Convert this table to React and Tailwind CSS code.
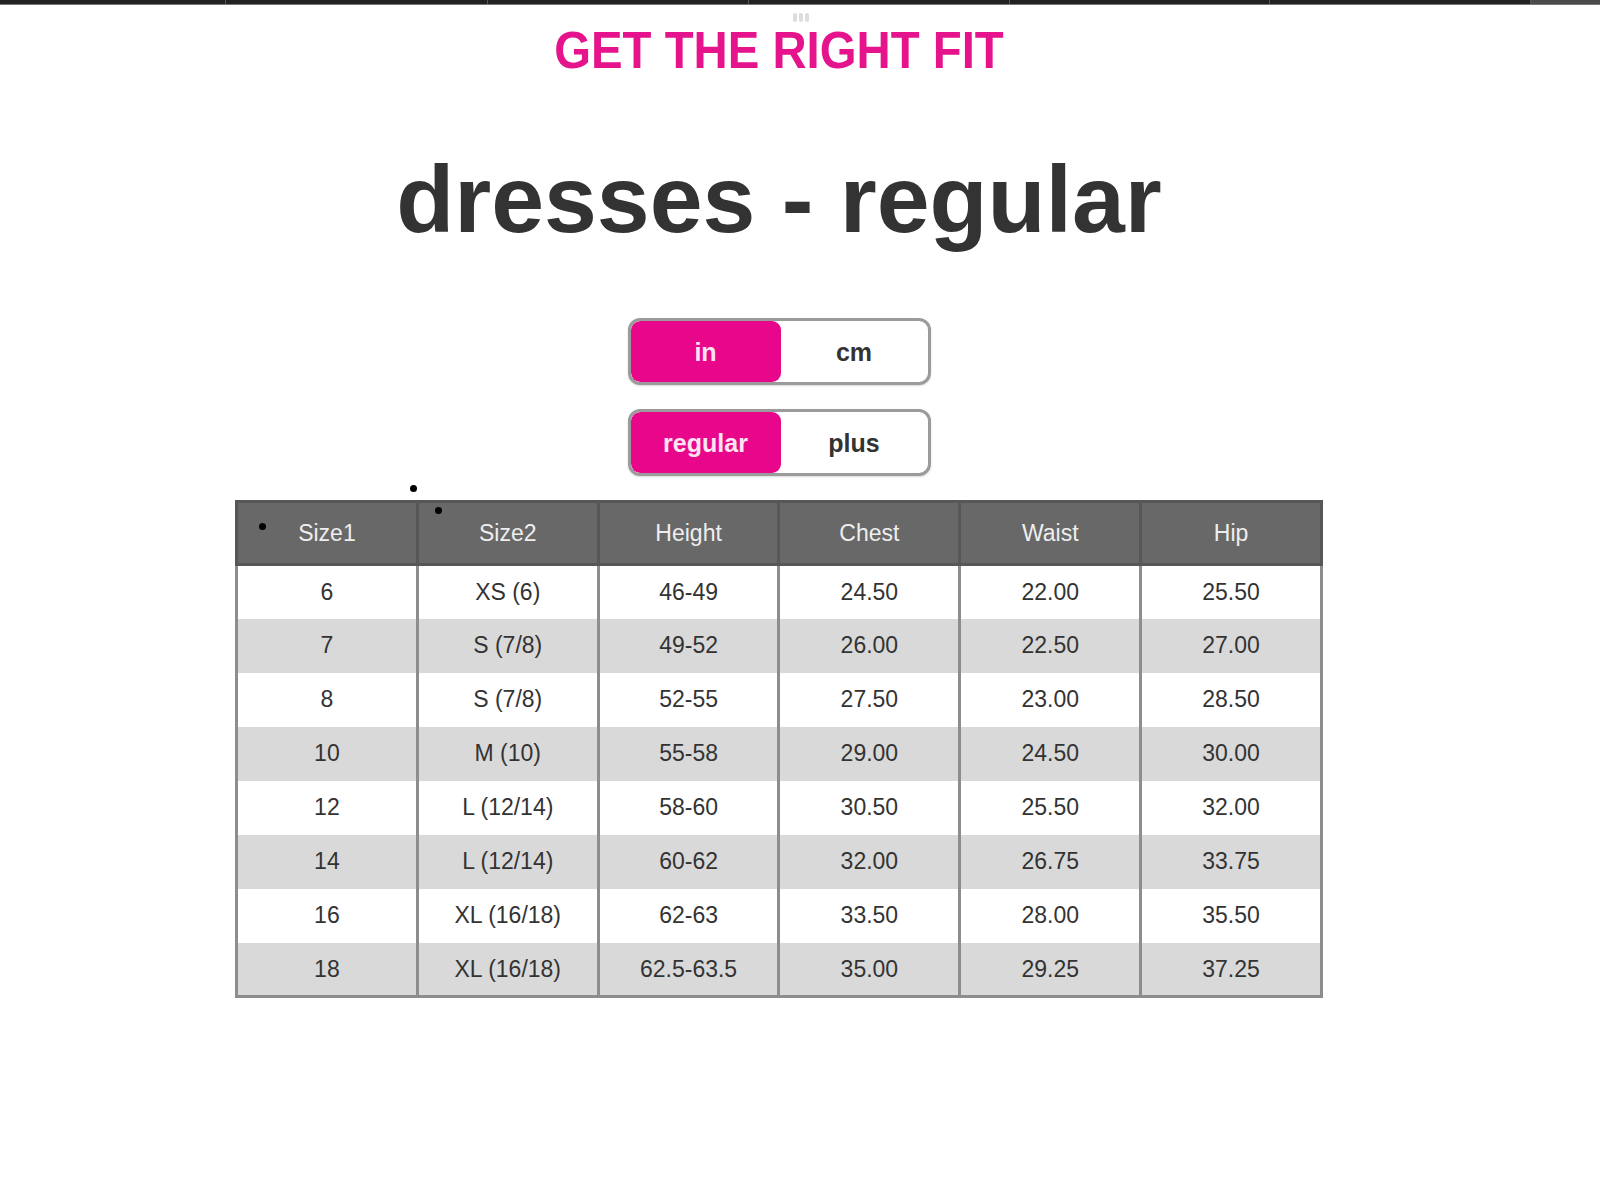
import React from "react";

const rows = [
  ["6", "XS (6)", "46-49", "24.50", "22.00", "25.50"],
  ["7", "S (7/8)", "49-52", "26.00", "22.50", "27.00"],
  ["8", "S (7/8)", "52-55", "27.50", "23.00", "28.50"],
  ["10", "M (10)", "55-58", "29.00", "24.50", "30.00"],
  ["12", "L (12/14)", "58-60", "30.50", "25.50", "32.00"],
  ["14", "L (12/14)", "60-62", "32.00", "26.75", "33.75"],
  ["16", "XL (16/18)", "62-63", "33.50", "28.00", "35.50"],
  ["18", "XL (16/18)", "62.5-63.5", "35.00", "29.25", "37.25"],
];

const headers = ["Size1", "Size2", "Height", "Chest", "Waist", "Hip"];

const Toggle = ({ on, off }) => (
  <div className="w-[303px] h-[67px] rounded-[12px] border-[3px] border-[#9b9b9b] bg-white flex overflow-hidden shadow-[0_1px_2px_rgba(0,0,0,0.15)]">
    <div className="w-[150px] h-full bg-[#e8078b] rounded-[9px] flex items-center justify-center pt-[2px] text-[25px] font-bold text-[#fde4f2]">
      {on}
    </div>
    <div className="flex-1 flex items-center justify-center pt-[2px] text-[25px] font-bold text-[#333333]">
      {off}
    </div>
  </div>
);

const TopBar = () => (
  <div className="flex h-[5px] w-full bg-[#222222] border-b border-[#777]">
    <div className="w-[226px] border-r border-[#555]" />
    <div className="w-[262px] border-r border-[#555]" />
    <div className="w-[261px] border-r border-[#555]" />
    <div className="w-[261px] border-r border-[#555]" />
    <div className="w-[260px] border-r border-[#555]" />
    <div className="w-[261px] border-r border-[#555]" />
    <div className="flex-1 bg-[#4a4a4a]" />
  </div>
);

const App = () => {
  return (
    <div
      className="relative w-[1600px] h-[1200px] bg-white flex flex-col"
      style={{ fontFamily: '"Liberation Sans", Arial, sans-serif' }}
    >
      <TopBar />
      <div className="absolute top-[13px] left-[793px] flex gap-[2px]">
        <span className="w-[4px] h-[9px] rounded-full bg-[#dddddd]" />
        <span className="w-[4px] h-[9px] rounded-full bg-[#dddddd]" />
        <span className="w-[4px] h-[9px] rounded-full bg-[#dddddd]" />
      </div>

      <div className="flex flex-col items-center pr-[42px]">
        <h2 className="mt-[19px] text-[52px] leading-none font-bold text-[#e5138c] scale-x-[0.91] whitespace-nowrap">
          GET THE RIGHT FIT
        </h2>

        <h1 className="mt-[76px] text-[95px] leading-none font-bold text-[#333333] whitespace-nowrap">
          dresses - regular
        </h1>

        <div className="mt-[71px] flex flex-col gap-[24px]">
          <Toggle on="in" off="cm" />
          <Toggle on="regular" off="plus" />
        </div>

        <table className="mt-[24px] w-[1088px] table-fixed border-collapse border-[3px] border-[#8d8d8d] text-[23px]">
          <thead>
            <tr>
              {headers.map((h) => (
                <th
                  key={h}
                  className="h-[63px] bg-[#686868] border-[3px] border-[#575757] font-normal text-[#eeeeee] text-center"
                >
                  {h}
                </th>
              ))}
            </tr>
          </thead>
          <tbody>
            {rows.map((r, i) => (
              <tr key={i} className={i % 2 === 0 ? "bg-white" : "bg-[#d9d9d9]"}>
                {r.map((c, j) => (
                  <td
                    key={j}
                    className="h-[54px] border-x-[3px] border-[#8d8d8d] text-center text-[#333333]"
                  >
                    {c}
                  </td>
                ))}
              </tr>
            ))}
          </tbody>
        </table>
      </div>

      <span className="absolute left-[410px] top-[485px] w-[7px] h-[7px] rounded-full bg-black" />
      <span className="absolute left-[435px] top-[507px] w-[7px] h-[7px] rounded-full bg-black" />
      <span className="absolute left-[259px] top-[523px] w-[7px] h-[7px] rounded-full bg-black" />
    </div>
  );
};

export default App;
